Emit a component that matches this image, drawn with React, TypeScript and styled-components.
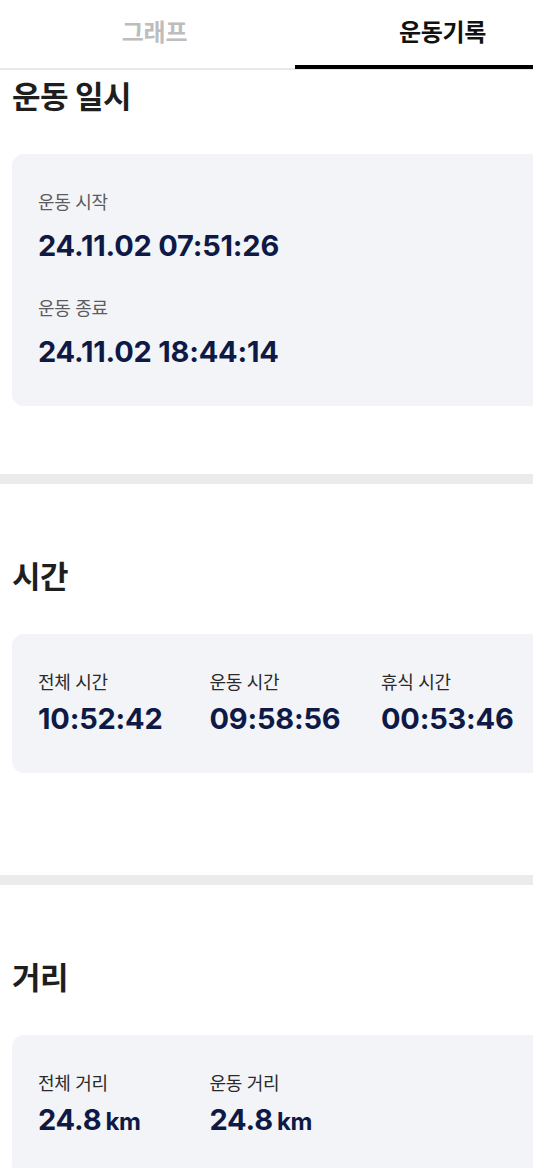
import React from 'react';
import styled, { createGlobalStyle } from 'styled-components';

const GlobalStyle = createGlobalStyle`
  html, body {
    margin: 0;
    padding: 0;
    background: #ffffff;
    overflow-x: hidden;
  }
  body {
    font-family: Inter, "Noto Sans CJK KR", "Noto Sans", sans-serif;
    -webkit-font-smoothing: antialiased;
  }
`;

const Page = styled.div`
  width: 590px;
  background: #ffffff;
`;

const TabBar = styled.div`
  display: flex;
  height: 70px;
  box-sizing: border-box;
  border-bottom: 2px solid #e9e9e9;
`;

const Tab = styled.div<{ $active?: boolean; $shift?: number }>`
  flex: 0 0 295px;
  box-sizing: border-box;
  position: relative;
  display: flex;
  align-items: center;
  justify-content: center;
  padding-bottom: 8px;
  padding-left: ${(p) => p.$shift || 0}px;
  font-size: 24px;
  font-weight: 700;
  letter-spacing: -0.3px;
  color: ${(p) => (p.$active ? '#111111' : '#bdbdbd')};
  &::after {
    content: '';
    display: ${(p) => (p.$active ? 'block' : 'none')};
    position: absolute;
    left: 0;
    right: 0;
    bottom: -1px;
    height: 4px;
    background: #000000;
  }
`;

const Section = styled.section<{ $top: number; $bottom: number }>`
  padding: ${(p) => p.$top}px 12px ${(p) => p.$bottom}px;
`;

const Title = styled.h2`
  margin: 0 0 37px;
  font-size: 31px;
  line-height: 40px;
  font-weight: 700;
  color: #1e1e1e;
  letter-spacing: -0.5px;
`;

const Card = styled.div<{ $cols?: number }>`
  background: #f3f4f8;
  border-radius: 12px;
  padding: 37px 27px 36px 26px;
  display: grid;
  grid-template-columns: ${(p) => (p.$cols ? `repeat(${p.$cols}, 171.5px)` : '1fr')};
  row-gap: 33px;
`;

const Item = styled.div<{ $gap: number }>`
  display: flex;
  flex-direction: column;
  gap: ${(p) => p.$gap}px;
`;

const Label = styled.div<{ $muted?: boolean }>`
  font-size: 18px;
  line-height: 24px;
  color: ${(p) => (p.$muted ? '#5c5c5c' : '#2a2a2a')};
  letter-spacing: -0.3px;
`;

const Value = styled.div`
  font-size: 29px;
  line-height: 36px;
  font-weight: 700;
  color: #0e1a45;
  letter-spacing: -0.2px;
  white-space: nowrap;
`;

const Unit = styled.span`
  font-size: 24px;
  margin-left: 4px;
`;

const Divider = styled.div`
  height: 10px;
  background: #ebebeb;
`;

const dates = [
  { label: '운동 시작', value: '24.11.02 07:51:26' },
  { label: '운동 종료', value: '24.11.02 18:44:14' },
];

const times = [
  { label: '전체 시간', value: '10:52:42' },
  { label: '운동 시간', value: '09:58:56' },
  { label: '휴식 시간', value: '00:53:46' },
];

const distances = [
  { label: '전체 거리', value: '24.8' },
  { label: '운동 거리', value: '24.8' },
];

export default function App() {
  return (
    <Page>
      <GlobalStyle />
      <TabBar>
        <Tab $shift={14}>그래프</Tab>
        <Tab $active>운동기록</Tab>
      </TabBar>

      <Section $top={7} $bottom={68}>
        <Title>운동 일시</Title>
        <Card>
          {dates.map((d) => (
            <Item key={d.label} $gap={13}>
              <Label $muted>{d.label}</Label>
              <Value>{d.value}</Value>
            </Item>
          ))}
        </Card>
      </Section>
      <Divider />

      <Section $top={73} $bottom={102}>
        <Title>시간</Title>
        <Card $cols={3}>
          {times.map((t) => (
            <Item key={t.label} $gap={6}>
              <Label>{t.label}</Label>
              <Value>{t.value}</Value>
            </Item>
          ))}
        </Card>
      </Section>
      <Divider />

      <Section $top={73} $bottom={60}>
        <Title>거리</Title>
        <Card $cols={3}>
          {distances.map((d) => (
            <Item key={d.label} $gap={6}>
              <Label>{d.label}</Label>
              <Value>
                {d.value}
                <Unit>km</Unit>
              </Value>
            </Item>
          ))}
        </Card>
      </Section>
    </Page>
  );
}
